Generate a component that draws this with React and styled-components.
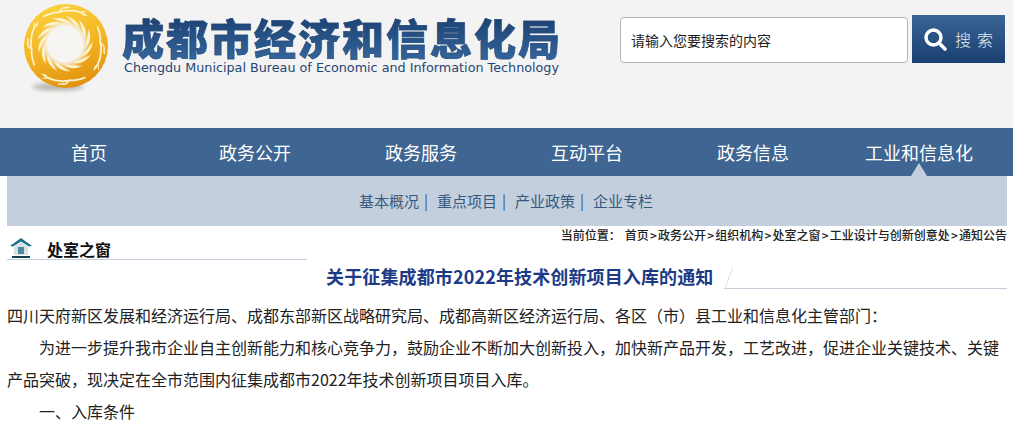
import styled, { createGlobalStyle } from "styled-components";

const GlobalStyle = createGlobalStyle`
    html, body {
        margin: 0;
        padding: 0;
        background: #fff;
        overflow: hidden;
    }
    body {
        font-family: "Noto Sans CJK SC", "Liberation Sans", sans-serif;
    }
`;

const Page = styled.div`
    width: 1013px;
    height: 432px;
    overflow: hidden;
`;

const Header = styled.header`
    height: 128px;
    background: #f3f3f3;
    display: flex;
    align-items: flex-start;
    padding: 4px 8px 0 22px;
    box-sizing: border-box;
`;

const Logo = styled.div`
    display: flex;
    gap: 12px;
    width: 540px;
`;

const LogoText = styled.div`
    display: flex;
    flex-direction: column;
    padding-top: 10px;
`;

const LogoTitle = styled.div`
    font-size: 42px;
    line-height: 46px;
    height: 46px;
    font-weight: 900;
    letter-spacing: 2px;
    white-space: nowrap;
    background: linear-gradient(#1b3f70, #34659b);
    -webkit-background-clip: text;
    background-clip: text;
    color: transparent;
    -webkit-text-stroke: 0.5px #24497a;
`;

const LogoEnglish = styled.div`
    font-family: "DejaVu Sans", sans-serif;
    font-size: 12.75px;
    line-height: 16px;
    color: #1f4674;
    white-space: nowrap;
    padding-left: 2px;
`;

const Search = styled.div`
    display: flex;
    gap: 4px;
    margin-top: 13px;
    margin-left: 58px;
`;

const SearchInput = styled.div`
    width: 276px;
    height: 44px;
    border: 1px solid #b5b5b5;
    border-radius: 4px;
    background: #fff;
    font-size: 14px;
    line-height: 44px;
    color: #222;
    padding-left: 10px;
`;

const SearchButton = styled.div`
    width: 93px;
    height: 48px;
    margin-top: -2px;
    box-sizing: border-box;
    padding-left: 5px;
    background: linear-gradient(#3a6494, #1a3f70);
    display: flex;
    align-items: center;
    justify-content: center;
    gap: 8px;
    color: #e8edf3;
    font-size: 16px;
    font-weight: 300;
    letter-spacing: 6px;
`;

const Nav = styled.nav`
    height: 48px;
    background: #3f6592;
    display: flex;
    padding-left: 6px;
`;

const NavItem = styled.div`
    position: relative;
    width: 166px;
    text-align: center;
    color: #fff;
    font-size: 18px;
    line-height: 48px;

    ${(p) =>
        p.$active &&
        `&::after {
            content: "";
            position: absolute;
            left: 50%;
            bottom: 0;
            margin-left: -8px;
            border-left: 8px solid transparent;
            border-right: 8px solid transparent;
            border-bottom: 13px solid #c3cfdc;
        }`}
`;

const SubNav = styled.div`
    margin: 0 6px 0 7px;
    height: 50px;
    box-sizing: border-box;
    padding: 0 2px 2px 0;
    background: #c3cfdc;
    display: flex;
    justify-content: center;
    align-items: center;
    gap: 9px;
    font-size: 15px;
`;

const SubItem = styled.span`
    display: flex;
    gap: 5px;
    color: #35597f;
`;

const TopRow = styled.div`
    display: flex;
    justify-content: space-between;
    margin-left: 7px;
    margin-right: 6px;
    height: 34px;
`;

const SectionHead = styled.div`
    width: 300px;
    height: 34px;
    box-sizing: border-box;
    border-bottom: 1px solid #c3cfdc;
    display: flex;
    align-items: flex-end;
    gap: 14px;
    padding-left: 2px;
`;

const SectionTitle = styled.span`
    font-size: 16px;
    font-weight: 700;
    line-height: 20px;
    color: #111;
`;

const Breadcrumb = styled.div`
    font-size: 12px;
    font-weight: 500;
    line-height: 18px;
    color: #222;
    white-space: nowrap;
    display: flex;
    gap: 4px;
`;

const Sep = styled.span`
    margin: 0 1.2px;
`;

const TitleRow = styled.div`
    display: flex;
    height: 39px;
    margin: 0 6px 0 326px;
`;

const Title = styled.h1`
    margin: 0;
    font-size: 18px;
    font-weight: 700;
    line-height: 33px;
    letter-spacing: 0.13px;
    color: #1c3a86;
    white-space: nowrap;
`;

const TitleRule = styled.div`
    flex: 1;
    height: 29px;
    box-sizing: border-box;
    margin-left: 11px;
    border-bottom: 1px solid #c6ccd8;
`;

const Article = styled.article`
    margin: 0 6px 0 7px;
    font-size: 16px;
    line-height: 32px;
    color: #222;
`;

const Para = styled.p`
    margin: 0;
    text-indent: ${(p) => (p.$indent ? "2em" : "0")};
`;

const blades = Array.from({ length: 13 }, (_, i) => (i * 360) / 13);
const figures = [-4, 92, 182, 272];

function LogoMark() {
    return (
        <svg width="88" height="90" viewBox="0 0 88 90" style={{ flex: "none" }}>
            <defs>
                <linearGradient id="gold" x1="0.3" y1="0" x2="0.6" y2="1">
                    <stop offset="0" stopColor="#fbd140" />
                    <stop offset="0.55" stopColor="#f3b321" />
                    <stop offset="1" stopColor="#e0900f" />
                </linearGradient>
                <radialGradient id="hole">
                    <stop offset="0" stopColor="#f6f5f2" />
                    <stop offset="0.68" stopColor="#f6f5f2" />
                    <stop offset="1" stopColor="#f6f5f2" stopOpacity="0" />
                </radialGradient>
                <filter id="soft" x="-30%" y="-100%" width="160%" height="300%">
                    <feGaussianBlur stdDeviation="2" />
                </filter>
            </defs>
            <ellipse cx="36" cy="83" rx="26" ry="3.5" fill="#8f8a80" opacity="0.6" filter="url(#soft)" />
            <circle cx="44" cy="42" r="42" fill="url(#gold)" />
            <circle cx="43" cy="40" r="26" fill="url(#hole)" />
            {blades.map((a) => (
                <path
                    key={a}
                    d="M44 12 Q56.5 15 57.5 26 Q52 18.5 44 12 Z"
                    fill="#fdf3d2"
                    transform={`rotate(${a} 43 40)`}
                />
            ))}
            {figures.map((a) => (
                <g key={a} transform={`rotate(${a} 44 42)`} fill="none" stroke="#fdf1cc" strokeLinecap="round">
                    <path d="M24 11 Q34 7 39 8 Q44 6 49 7 Q58 7 65 12" strokeWidth="1.8" />
                    <path d="M40 7 Q43 2.5 47 4 M46 4 L50 3.5" strokeWidth="1.4" />
                    <path d="M62 9 L66 9 M63 12 L67 13" strokeWidth="1.1" />
                </g>
            ))}
        </svg>
    );
}

function SearchIcon() {
    return (
        <svg width="24" height="24" viewBox="0 0 24 24">
            <circle cx="10.5" cy="10.5" r="7.5" fill="none" stroke="#fff" strokeWidth="3.4" />
            <path d="M16 16 L22 22" stroke="#fff" strokeWidth="3.6" strokeLinecap="round" />
        </svg>
    );
}

function HouseIcon() {
    return (
        <svg width="24" height="24" viewBox="0 0 24 24">
            <path d="M12 3 L23 11 L20 11.5 L12 6.5 L4 11.5 L1 11 Z" fill="#1f6f86" />
            <path d="M5 11.5 L12 7.5 L19 11.5 L19 20 L5 20 Z" fill="#d5e3e6" />
            <rect x="9" y="12" width="6" height="7" fill="#4a8a9c" />
            <rect x="3" y="21" width="18" height="2" fill="#123f55" />
        </svg>
    );
}

const navItems = ["首页", "政务公开", "政务服务", "互动平台", "政务信息", "工业和信息化"];
const subItems = ["基本概况", "重点项目", "产业政策", "企业专栏"];
const crumbs = ["首页", "政务公开", "组织机构", "处室之窗", "工业设计与创新创意处", "通知公告"];

function App() {
    return (
        <Page>
            <GlobalStyle />
            <Header>
                <Logo>
                    <LogoMark />
                    <LogoText>
                        <LogoTitle>成都市经济和信息化局</LogoTitle>
                        <LogoEnglish>Chengdu Municipal Bureau of Economic and Information Technology</LogoEnglish>
                    </LogoText>
                </Logo>
                <Search>
                    <SearchInput>请输入您要搜索的内容</SearchInput>
                    <SearchButton>
                        <SearchIcon />
                        搜索
                    </SearchButton>
                </Search>
            </Header>
            <Nav>
                {navItems.map((item, i) => (
                    <NavItem key={item} $active={i === navItems.length - 1}>
                        {item}
                    </NavItem>
                ))}
            </Nav>
            <SubNav>
                {subItems.map((item, i) => (
                    <SubItem key={item}>
                        {item}
                        {i < subItems.length - 1 && <span>|</span>}
                    </SubItem>
                ))}
            </SubNav>
            <TopRow>
                <SectionHead>
                    <HouseIcon />
                    <SectionTitle>处室之窗</SectionTitle>
                </SectionHead>
                <Breadcrumb>
                    <span>当前位置：</span>
                    <span>
                        {crumbs.map((c, i) => (
                            <span key={c}>
                                {i > 0 && <Sep>&gt;</Sep>}
                                {c}
                            </span>
                        ))}
                    </span>
                </Breadcrumb>
            </TopRow>
            <TitleRow>
                <Title>关于征集成都市2022年技术创新项目入库的通知</Title>
                <TitleRule>
                    <svg width="9" height="29" viewBox="0 0 9 29" style={{ display: "block" }}>
                        <path d="M8.5 8 L1 28.5" stroke="#d8dce4" strokeWidth="1" fill="none" />
                    </svg>
                </TitleRule>
            </TitleRow>
            <Article>
                <Para>四川天府新区发展和经济运行局、成都东部新区战略研究局、成都高新区经济运行局、各区（市）县工业和信息化主管部门：</Para>
                <Para $indent>为进一步提升我市企业自主创新能力和核心竞争力，鼓励企业不断加大创新投入，加快新产品开发，工艺改进，促进企业关键技术、关键产品突破，现决定在全市范围内征集成都市2022年技术创新项目项目入库。</Para>
                <Para $indent>一、入库条件</Para>
            </Article>
        </Page>
    );
}

export default App;
